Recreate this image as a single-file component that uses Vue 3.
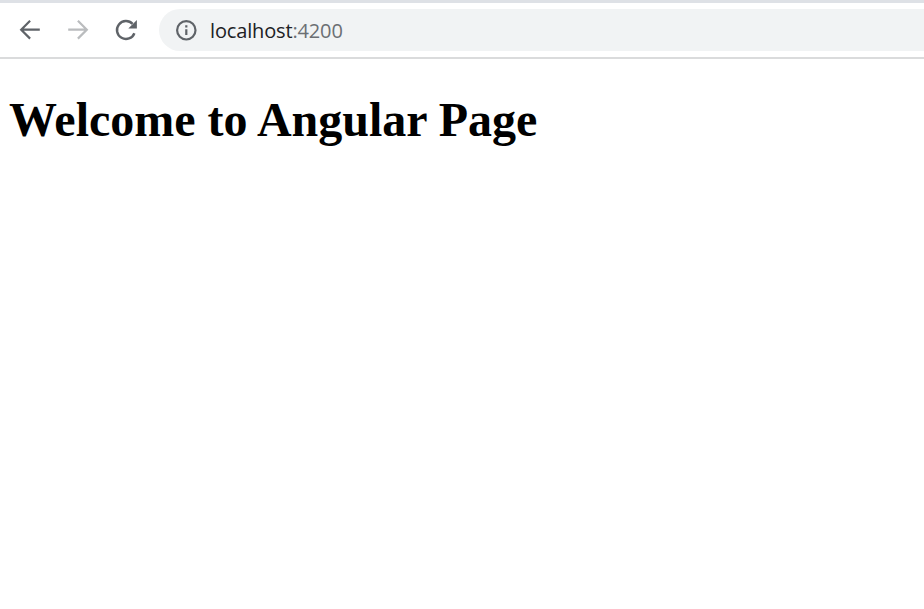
<script setup>
const host = 'localhost'
const port = ':4200'
const title = 'Welcome to Angular Page'
</script>

<template>
  <div class="window">
    <header class="toolbar">
      <nav class="controls">
        <svg class="icon" width="24" height="24" viewBox="0 0 24 24" aria-label="Back">
          <path d="M21.8 11.7H3.4M12.1 2.8 3.2 11.7l8.9 8.9" />
        </svg>
        <svg class="icon muted" width="24" height="24" viewBox="0 0 24 24" aria-label="Forward">
          <path d="M2.2 11.7h18.4M11.9 2.8l8.9 8.9-8.9 8.9" />
        </svg>
        <svg class="icon reload" width="24" height="24" viewBox="0 0 24 24" aria-label="Reload">
          <path d="M20.4 15.2A9 9 0 1 1 18.6 5.9" />
          <path class="solid" d="M22.9 2v8.6h-8.6z" />
        </svg>
      </nav>
      <div class="address">
        <svg class="info" width="24" height="24" viewBox="0 0 24 24">
          <circle cx="12.3" cy="12.3" r="9.2" />
          <path d="M12.3 11.2v5.8M12.3 7.3v2.2" />
        </svg>
        <span class="url"><span class="host">{{ host }}</span><span class="port">{{ port }}</span></span>
      </div>
    </header>
    <main class="page">
      <h1>{{ title }}</h1>
    </main>
  </div>
</template>

<style>
body {
  background: #fff;
  overflow: hidden;
}
</style>

<style scoped>
.window {
  height: 609px;
  overflow: hidden;
  background: #fff;
}
.toolbar {
  box-sizing: border-box;
  height: 59px;
  border-top: 3px solid #dee1e6;
  border-bottom: 2px solid #dadbdc;
  display: flex;
  padding: 6px 0 6px 18px;
}
.controls {
  display: flex;
  gap: 24px;
  width: 141px;
  padding-top: 9px;
}
.icon {
  flex: none;
  fill: none;
  stroke: #5f6368;
  stroke-width: 2.2;
}
.muted {
  stroke: #babcbe;
}
.reload {
  stroke-width: 2.4;
}
.solid {
  fill: #5f6368;
  stroke: none;
}
.address {
  flex: 1;
  height: 42px;
  border-radius: 21px 0 0 21px;
  background: #f1f3f4;
  display: flex;
  align-items: center;
  padding-left: 15px;
}
.info {
  fill: none;
  stroke: #5f6368;
  stroke-width: 2.2;
}
.url {
  margin-left: 12px;
  padding-top: 2px;
  font: 20px/42px "Open Sans", sans-serif;
  letter-spacing: -0.15px;
  white-space: nowrap;
}
.host {
  color: #202124;
}
.port {
  color: #6b6f73;
}
.page {
  padding: 33px 9px;
}
h1 {
  margin: 0;
  font: bold 48px/55px "Liberation Serif", serif;
  color: #000;
  white-space: nowrap;
}
</style>
